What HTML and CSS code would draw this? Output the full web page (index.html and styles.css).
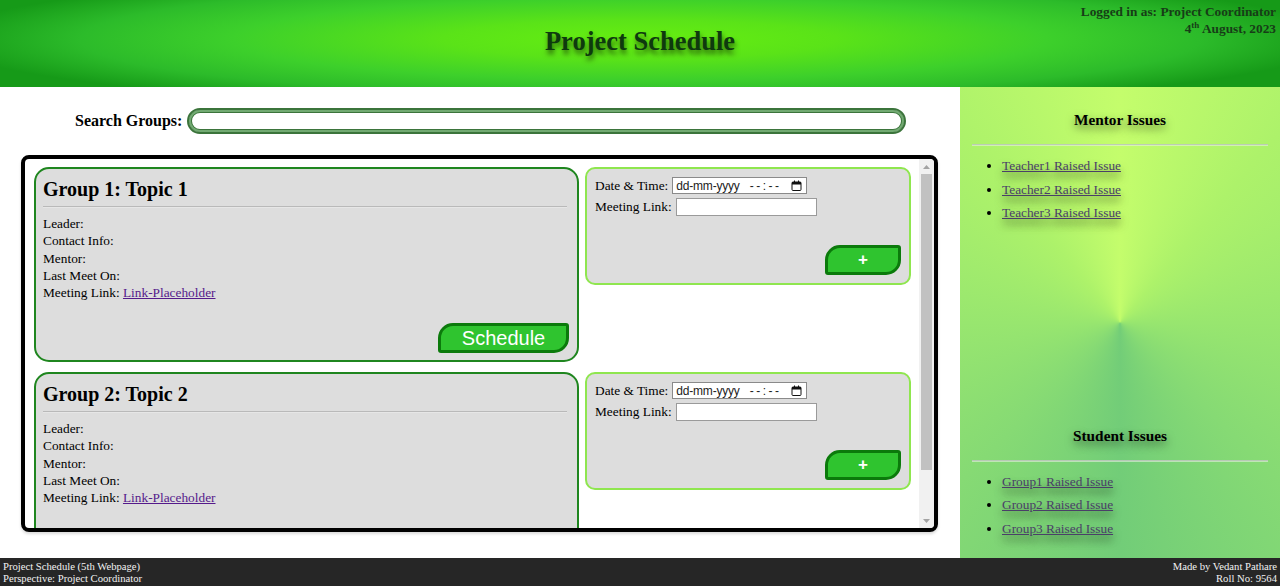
FILE: index.html
```html
<!DOCTYPE html>
<html lang="en">
<head>
<meta charset="utf-8">
<title>Project Schedule</title>
<link rel="stylesheet" href="styles.css">
</head>
<body>
<header class="top">
  <div class="top-spacer"></div>
  <h1 class="title">Project Schedule</h1>
  <div class="user-info">Logged in as: Project Coordinator<br>4<sup>th</sup> August, 2023</div>
</header>
<div class="main">
  <section class="content">
    <div class="search">
      <label class="search-label" for="q">Search Groups:</label>
      <input class="search-input" id="q" type="text">
    </div>
    <div class="groups">
      <div class="groups-list">
        <div class="group-row">
          <div class="card">
            <h2 class="card-title">Group 1: Topic 1</h2>
            <hr class="card-rule">
            <div class="card-info">
              <div>Leader:</div>
              <div>Contact Info:</div>
              <div>Mentor:</div>
              <div>Last Meet On:</div>
              <div>Meeting Link: <a class="meet-link" href="#">Link-Placeholder</a></div>
            </div>
            <button class="btn btn-schedule">Schedule</button>
          </div>
          <div class="panel">
            <div class="field">Date &amp; Time:
              <span class="dt-box"><span class="dt-date">dd-mm-yyyy</span><span class="dt-time">--:--</span>
                <svg class="dt-icon" width="11" height="11" viewBox="0 0 11 11"><rect x="1" y="2" width="9" height="8.5" rx="1" fill="none" stroke="#111" stroke-width="1"/><rect x="1" y="2" width="9" height="2.5" fill="#111"/><rect x="3" y="0.5" width="1" height="2" fill="#111"/><rect x="7" y="0.5" width="1" height="2" fill="#111"/></svg>
              </span>
            </div>
            <div class="field">Meeting Link: <input class="link-input" type="text"></div>
            <button class="btn btn-add">+</button>
          </div>
        </div>
        <div class="group-row">
          <div class="card">
            <h2 class="card-title">Group 2: Topic 2</h2>
            <hr class="card-rule">
            <div class="card-info">
              <div>Leader:</div>
              <div>Contact Info:</div>
              <div>Mentor:</div>
              <div>Last Meet On:</div>
              <div>Meeting Link: <a class="meet-link" href="#">Link-Placeholder</a></div>
            </div>
            <button class="btn btn-schedule">Schedule</button>
          </div>
          <div class="panel">
            <div class="field">Date &amp; Time:
              <span class="dt-box"><span class="dt-date">dd-mm-yyyy</span><span class="dt-time">--:--</span>
                <svg class="dt-icon" width="11" height="11" viewBox="0 0 11 11"><rect x="1" y="2" width="9" height="8.5" rx="1" fill="none" stroke="#111" stroke-width="1"/><rect x="1" y="2" width="9" height="2.5" fill="#111"/><rect x="3" y="0.5" width="1" height="2" fill="#111"/><rect x="7" y="0.5" width="1" height="2" fill="#111"/></svg>
              </span>
            </div>
            <div class="field">Meeting Link: <input class="link-input" type="text"></div>
            <button class="btn btn-add">+</button>
          </div>
        </div>
      </div>
      <div class="scrollbar" aria-hidden="true">
        <div class="sb-btn"><svg width="7" height="4" viewBox="0 0 7 4"><path d="M0 4 L3.5 0 L7 4 Z" fill="#a3a3a3"/></svg></div>
        <div class="sb-track"><div class="sb-thumb"></div></div>
        <div class="sb-btn"><svg width="7" height="4" viewBox="0 0 7 4"><path d="M0 0 L7 0 L3.5 4 Z" fill="#a3a3a3"/></svg></div>
      </div>
    </div>
  </section>
  <aside class="sidebar">
    <div class="issues">
      <h3 class="issues-title">Mentor Issues</h3>
      <hr class="issues-rule">
      <ul class="issues-list">
        <li><a href="#">Teacher1 Raised Issue</a></li>
        <li><a href="#">Teacher2 Raised Issue</a></li>
        <li><a href="#">Teacher3 Raised Issue</a></li>
      </ul>
    </div>
    <div class="issues">
      <h3 class="issues-title">Student Issues</h3>
      <hr class="issues-rule">
      <ul class="issues-list">
        <li><a href="#">Group1 Raised Issue</a></li>
        <li><a href="#">Group2 Raised Issue</a></li>
        <li><a href="#">Group3 Raised Issue</a></li>
      </ul>
    </div>
  </aside>
</div>
<footer class="foot">
  <div class="foot-left">Project Schedule (5th Webpage)<br>Perspective: Project Coordinator</div>
  <div class="foot-right">Made by Vedant Pathare<br>Roll No: 9564</div>
</footer>
</body>
</html>
```

FILE: styles.css
```css
* { box-sizing: border-box; }

html, body {
  margin: 0;
  padding: 0;
}

body {
  width: 1280px;
  height: 586px;
  display: flex;
  flex-direction: column;
  font-family: "Liberation Serif", "Times New Roman", serif;
  color: #000;
  overflow: hidden;
}

/* Header */
.top {
  height: 87px;
  flex: 0 0 87px;
  display: grid;
  grid-template-columns: 1fr auto 1fr;
  background: radial-gradient(700px 70px at 50% 45%, #66ee11 0%, #5ae318 28%, #3dd02b 58%, #2cbb2a 80%, #169a18 100%);
}

.title {
  margin: 0;
  align-self: center;
  font-size: 26.5px;
  font-weight: bold;
  color: #0e3a0e;
  text-shadow: 1px 4px 5px rgba(0, 0, 0, 0.55);
  line-height: 30px;
  padding-bottom: 6px;
}

.user-info {
  justify-self: end;
  text-align: right;
  font-size: 13.33px;
  font-weight: bold;
  line-height: 17px;
  color: #173d17;
  padding: 3px 4px 0 0;
}

.user-info sup {
  font-size: 9px;
  line-height: 0;
  vertical-align: 5px;
}

/* Main */
.main {
  flex: 1 1 auto;
  display: flex;
  min-height: 0;
}

.content {
  width: 960px;
  background: #fff;
  padding-top: 21px;
}

.search {
  display: flex;
  align-items: center;
  height: 26px;
  padding-left: 75px;
}

.search-label {
  font-size: 16px;
  font-weight: bold;
  margin-right: 5px;
}

.search-input {
  width: 719px;
  height: 26px;
  border: 2px solid #3b743b;
  border-radius: 13px;
  box-shadow: inset 0 0 0 2px #72aa72, inset 0 0 0 3px #3b743b;
  background: #fff;
  outline: none;
}

.groups {
  margin: 21px 0 0 21px;
  width: 917px;
  height: 377px;
  border: 4px solid #000;
  border-radius: 8px;
  overflow: hidden;
  display: flex;
  box-shadow: 0 2px 3px rgba(0, 0, 0, 0.15);
}

.groups-list {
  flex: 1 1 auto;
  overflow: hidden;
  padding: 8px 0 0 9px;
}

.scrollbar {
  width: 15px;
  flex: 0 0 15px;
  background: #f1f1f1;
  display: flex;
  flex-direction: column;
}

.sb-btn {
  height: 15px;
  display: flex;
  align-items: center;
  justify-content: center;
}

.sb-track {
  flex: 1 1 auto;
  padding: 0 2px;
}

.sb-thumb {
  height: 296px;
  background: #c1c1c1;
}

.group-row {
  display: flex;
  align-items: flex-start;
  gap: 6px;
  margin-bottom: 10px;
}

.card {
  width: 545px;
  height: 195px;
  flex: 0 0 545px;
  background: #dddddd;
  border: 2px solid #1f861f;
  border-radius: 15px;
  padding: 0 10px 0 7px;
  display: flex;
  flex-direction: column;
}

.card-title {
  margin: 8px 0 0;
  font-size: 20px;
  line-height: 24px;
  font-weight: bold;
}

.card-rule {
  margin: 5px 0 0;
  border: 0;
  border-top: 1px solid #b9b9b9;
  border-bottom: 1px solid #e6e6e6;
  height: 0;
}

.card-info {
  margin-top: 7px;
  font-size: 13.33px;
  line-height: 17.25px;
}

.meet-link {
  color: #551a8b;
}

.btn {
  font-family: "Liberation Sans", Arial, sans-serif;
  color: #fff;
  background: #2fc42f;
  border: 3px solid #0b7a0b;
  border-radius: 15px 3px 15px 3px;
  cursor: pointer;
  padding: 0;
}

.btn-schedule {
  margin-top: auto;
  align-self: flex-end;
  margin-bottom: 7px;
  margin-right: -2px;
  width: 131px;
  height: 30px;
  font-size: 20px;
  line-height: 22px;
}

.panel {
  width: 326px;
  height: 118px;
  flex: 0 0 326px;
  background: #dddddd;
  border: 2px solid #8fe64f;
  border-radius: 10px;
  padding: 8px;
  display: flex;
  flex-direction: column;
  font-size: 13.33px;
}

.field {
  display: flex;
  align-items: center;
  gap: 4px;
  height: 17px;
  margin-bottom: 4px;
  white-space: nowrap;
}

.field + .field {
  height: 18px;
}

.dt-box {
  display: inline-flex;
  align-items: center;
  width: 135px;
  height: 17px;
  padding: 0 4px 0 3px;
  border: 1px solid #8a8a8a;
  background: #fff;
  font-family: "Liberation Sans", Arial, sans-serif;
  font-size: 12px;
  color: #222;
}

.dt-date {
  letter-spacing: -0.2px;
}

.dt-time {
  margin-left: 10px;
  letter-spacing: 2.5px;
}

.dt-icon {
  margin-left: auto;
  display: block;
}

.link-input {
  width: 141px;
  height: 18px;
  border: 1px solid #9a9a9a;
  background: #fff;
  margin: 0;
  padding: 0 2px;
}

.btn-add {
  margin-top: auto;
  align-self: flex-end;
  width: 76px;
  height: 30px;
  font-size: 17px;
  font-weight: bold;
  line-height: 20px;
}

/* Sidebar */
.sidebar {
  width: 320px;
  flex: 0 0 320px;
  display: flex;
  flex-direction: column;
  justify-content: space-between;
  padding: 23px 12px 18px;
  background: conic-gradient(from 0deg at 50% 50%, #c4fd6c 0deg, #adf26a 40deg, #98e66f 90deg, #86da74 135deg, #72cd78 180deg, #86da74 225deg, #98e66f 270deg, #adf26a 320deg, #c4fd6c 360deg);
}

.issues-title {
  margin: 0;
  text-align: center;
  font-size: 15.3px;
  line-height: 20px;
  font-weight: bold;
  text-shadow: 0 4px 8px rgba(0, 0, 0, 0.5);
}

.issues-rule {
  margin: 14px 0 0;
  border: 0;
  border-top: 1px solid rgba(190, 200, 190, 0.9);
  border-bottom: 1px solid rgba(230, 240, 225, 0.6);
  height: 0;
}

.issues-list {
  margin: 8px 0 0;
  padding-left: 30px;
  font-size: 13.33px;
  line-height: 23.5px;
}

.issues-list a {
  color: #4a3f68;
  text-shadow: 0 6px 9px rgba(0, 0, 0, 0.55);
}

/* Footer */
.foot {
  height: 28px;
  flex: 0 0 28px;
  background: #262626;
  color: #f2f2f2;
  display: flex;
  justify-content: space-between;
  padding: 2px 3px;
  font-size: 10.67px;
  line-height: 12px;
}

.foot-right {
  text-align: right;
}
```
